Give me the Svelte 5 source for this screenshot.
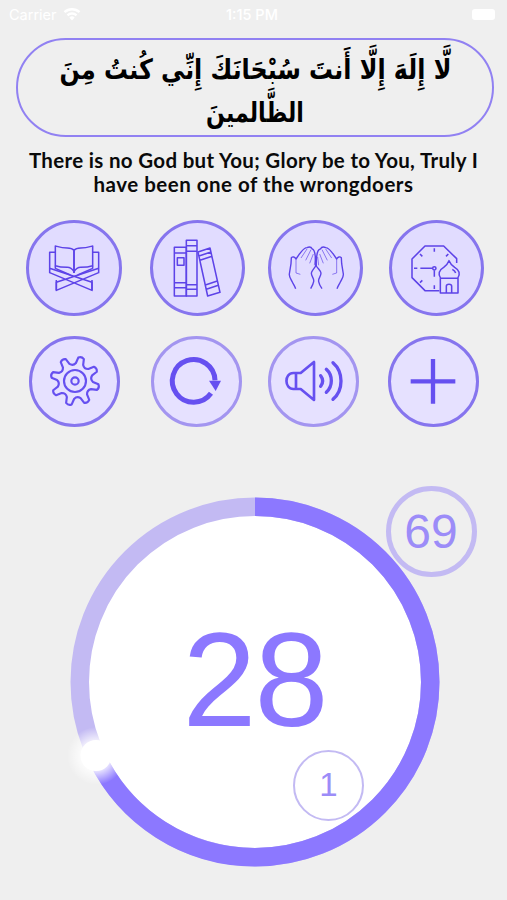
<script lang="ts">
  interface Action {
    id: string;
    label: string;
    view: string;
    faded?: boolean;
  }

  const topActions: Action[] = [
    { id: "quran", label: "Quran", view: "72 69 180 180" },
    { id: "books", label: "Books", view: "79 69 180 180" },
    { id: "dua", label: "Dua", view: "75 69 180 180" },
    { id: "times", label: "Prayer times", view: "79 69 180 180" },
  ];

  const bottomActions: Action[] = [
    { id: "settings", label: "Settings", view: "74 63 180 180" },
    { id: "reset", label: "Reset", view: "439 63 180 180", faded: true },
    { id: "sound", label: "Sound", view: "71 62 180 180", faded: true },
    { id: "add", label: "Add", view: "431 62 180 180" },
  ];

  let count = $state(28);
  let total = $state(69);
  let rounds = $state(1);

  const radius = 175.25;
  const length = 2 * Math.PI * radius;
  const progress = 0.68;

  // gear outline, eight rounded teeth
  const gear = Array.from({ length: 8 }, (_, i) => {
    const point = (r: number, deg: number) => {
      const a = ((deg + i * 45 - 75) * Math.PI) / 180;
      return `${(164 + r * Math.cos(a)).toFixed(1)} ${(153 + r * Math.sin(a)).toFixed(1)}`;
    };
    return `${i ? "L" : "M"}${point(54, -12)} L${point(71, -7)} Q${point(77, 0)} ${point(71, 7)} L${point(54, 12)} Q${point(45, 22.5)} ${point(54, 33)}`;
  }).join(" ") + "Z";
</script>

{#snippet icon(id: string)}
  {#if id === "quran"}
    <g stroke-width="4.6">
      <path d="M162 106c-5-6-12-7-20-7-14 0-21-2-36-6v59c14 5 22 5 36 5 9 0 15 5 20 13 5-8 11-13 20-13 14 0 22 0 36-5V93c-15 4-22 6-36 6-8 0-15 1-20 7zv68" />
      <path d="M162 106v68M106 112H89v61l127 53v-24L89 160M218 112h18v61l-127 53v-24l127-42" />
      <path d="M106 152v8l45 20M218 152v8l-45 20M109 195v31M216 195v31" />
    </g>
  {:else if id === "books"}
    <g stroke-width="4.6">
      <path d="M101 97h36v146h-36zM101 114h36M101 203h36M101 218h36M110 128h20v23h-20z" />
      <path d="M137 76h32v167h-32zM137 92h32M137 109h32M137 209h32M137 223h32" />
      <path d="M172 111l36-12 30 133-37 11zM175 123l36-12M178 136l36-12M194 210l36-12M197 223l36-12" />
    </g>
  {:else if id === "dua"}
    <g stroke-width="4.2">
      <path d="M104 221c-3-8-8-15-10-20-5-10-10-16-9-24l5-31 1-18c4-4 10-3 14 4l11-16c7-8 13-18 22-18 6-3 12-3 16 4 6 1 8 13 9 24 1 10 2 14 1 27-5 8-12 14-13 21 0 11 9 15 7 26-1 6-5 14-9 21" />
      <path d="M228 221c3-8 8-15 10-20 5-10 10-16 9-24l-5-31-1-18c-4-4-10-3-14 4l-11-16c-7-8-13-18-22-18-6-3-12-3-16 4-6 1-10 12-11 24-1 10-2 14-1 27 5 8 13 14 14 21 0 11-9 15-7 26 1 6 5 14 10 21" />
      <path stroke-width="2" d="M105 132v42l13 4M138 102l-18 27M150 104l-16 32M157 117l-11 28M163 126l-3 25M227 132v42l-13 4M194 102l18 27M183 104l16 32M176 117l11 28M170 126l3 25" />
    </g>
  {:else if id === "times"}
    <g stroke-width="4.6">
      <path d="M231 144v-13l-39-38h-56l-39 39v56l39 39h43" />
      <circle cx="164" cy="160" r="5" />
      <path d="M122 160h37M164 166v19M164 100v10M164 211v11M103 160h10M121 117l7 7M206 117l-7 7M121 203l7-7" />
      <path d="M183 190c-9-13-5-25 9-33 7-5 12-10 16-20 4 10 10 15 17 20 14 8 18 20 9 33zM182 190h53v44h-53zM200 234v-20q0-6 8-6t8 6v20M218 163q8 4 10 11" />
    </g>
  {:else if id === "settings"}
    <g stroke-width="6.5">
      <path d={gear} />
      <circle cx="164" cy="153" r="33" />
      <circle cx="164" cy="153" r="11" />
    </g>
  {:else if id === "reset"}
    <path stroke-width="15" d="M574 190A64 64 0 1 1 586 151" />
    <path class="solid" d="M568 152h36l-16 31z" />
  {:else if id === "sound"}
    <g stroke-width="8">
      <path d="M161 95v114l-40-33H99c-27 0-28-48 0-48h22zM107 129v46" />
      <path stroke-width="10" stroke-linecap="round" d="M181 136q12 16 0 32M198 117c20 18 20 51 0 69M218 97c32 28 32 82 0 110" />
    </g>
  {:else}
    <path stroke-width="13" d="M521 86v134M454 153h134" />
  {/if}
{/snippet}

{#snippet actionButton(action: Action)}
  <button class="action {action.id}" class:faded={action.faded} aria-label={action.label}>
    <svg viewBox={action.view}>{@render icon(action.id)}</svg>
  </button>
{/snippet}

<main class="screen">
  <header class="status">
    <div class="carrier">
      <span>Carrier</span>
      <svg class="wifi" viewBox="0 0 18 14">
        <path d="M1.5 5.2a11 11 0 0 1 15 0M4.5 8.4a6.5 6.5 0 0 1 9 0" />
        <path class="dot" d="M9 13.5l-2.7-3a4 4 0 0 1 5.4 0z" />
      </svg>
    </div>
    <span class="time">1:15 PM</span>
    <div class="battery"></div>
  </header>

  <section class="verse" dir="rtl" lang="ar">
    <p>لَّا إِلَهَ إِلَّا أَنتَ سُبْحَانَكَ إِنِّي كُنتُ مِنَ</p>
    <p class="second">الظَّالمينَ</p>
  </section>

  <div class="translation">
    <p>There is no God but You; Glory be to You, Truly I</p>
    <p class="rest">have been one of the wrongdoers</p>
  </div>

  <nav class="actions top">
    {#each topActions as action (action.id)}
      {@render actionButton(action)}
    {/each}
  </nav>
  <nav class="actions bottom">
    {#each bottomActions as action (action.id)}
      {@render actionButton(action)}
    {/each}
  </nav>

  <section class="dial">
    <svg class="ring" viewBox="0 0 370 370">
      <defs>
        <radialGradient id="glow">
          <stop offset="45%" stop-color="#fff" stop-opacity="0.9" />
          <stop offset="100%" stop-color="#fff" stop-opacity="0" />
        </radialGradient>
      </defs>
      <circle class="track" cx="185" cy="185" r={radius} />
      <circle
        class="progress"
        cx="185"
        cy="185"
        r={radius}
        stroke-dasharray="{length * progress} {length}"
        transform="rotate(-90 185 185)"
      />
      <circle cx="26" cy="259" r="29" fill="url(#glow)" />
      <circle cx="26" cy="258.5" r="15.5" fill="#fff" />
    </svg>
    <span class="count">{count}</span>
    <div class="badge total">{total}</div>
    <div class="badge rounds">{rounds}</div>
  </section>
</main>

<style>
  :global(body) {
    margin: 0;
    background: #efefef;
  }

  .screen {
    width: 507px;
    height: 900px;
    overflow: hidden;
    background: #efefef;
    font-family: "Liberation Sans", Arial, sans-serif;
  }

  p {
    margin: 0;
    white-space: nowrap;
  }

  .status {
    display: grid;
    grid-template-columns: 1fr auto 1fr;
    align-items: center;
    box-sizing: border-box;
    height: 28px;
    padding: 0 12px 0 9px;
    font: 14.5px Inter, sans-serif;
    color: #fff;
  }

  .carrier {
    display: flex;
    align-items: center;
    gap: 6px;
  }

  .wifi {
    width: 18px;
    height: 14px;
    fill: none;
    stroke: #fff;
    stroke-width: 2.5;
  }

  .wifi .dot {
    fill: #fff;
    stroke: none;
  }

  .time {
    font-weight: 500;
  }

  .battery {
    justify-self: end;
    width: 23px;
    height: 11px;
    border-radius: 3px;
    background: #fff;
  }

  .verse {
    display: flex;
    flex-direction: column;
    align-items: center;
    box-sizing: border-box;
    width: 478px;
    height: 99px;
    margin: 10px 0 0 16px;
    padding-top: 7px;
    border: 2.5px solid #9181f2;
    border-radius: 50px;
    font: bold 28px/45px "DejaVu Sans", sans-serif;
    color: #000;
  }

  .verse p {
    transform: scaleX(0.85);
  }

  .verse .second {
    line-height: 42px;
    transform: scaleX(0.79);
  }

  .translation {
    margin-top: 11px;
    text-align: center;
    font: bold 20.5px/24px Lato, sans-serif;
    letter-spacing: 0.32px;
    color: #0a0a0a;
  }

  .translation .rest {
    letter-spacing: 0.5px;
  }

  .actions {
    display: flex;
    align-items: center;
    justify-content: space-between;
  }

  .actions.top {
    margin: 24px 23px 0 26px;
  }

  .actions.bottom {
    margin: 19.5px 28px 0 29px;
  }

  .action {
    display: flex;
    align-items: center;
    justify-content: center;
    box-sizing: border-box;
    width: 95px;
    height: 96px;
    padding: 0;
    border: 3.5px solid #8675ee;
    border-radius: 50%;
    background: #e1dcff;
  }

  .action.quran {
    width: 96px;
  }

  .action.books,
  .action.reset {
    margin: 0 -2px 0 2px;
  }

  .bottom .action {
    width: 91px;
    height: 91px;
    background: #e6e1ff;
  }

  .bottom .action.faded {
    border-color: #a395f0;
  }

  .action svg {
    flex: none;
    width: 60px;
    height: 60px;
    fill: none;
    stroke: #5d43e8;
    stroke-linejoin: round;
  }

  .bottom .action svg {
    stroke: #6650f0;
  }

  .action svg .solid {
    fill: #6650f0;
    stroke: none;
  }

  .dial {
    position: relative;
    display: flex;
    align-items: center;
    justify-content: center;
    width: 370px;
    height: 370px;
    margin: 70px 0 0 69.5px;
  }

  .ring {
    position: absolute;
    inset: 0;
    overflow: visible;
  }

  .track {
    fill: #fff;
    stroke: #c3baf3;
    stroke-width: 18.5;
  }

  .progress {
    fill: none;
    stroke: #8c78ff;
    stroke-width: 18.5;
  }

  .count {
    position: relative;
    margin-bottom: 4px;
    font-size: 133px;
    line-height: 136px;
    letter-spacing: -2px;
    color: #8c78ff;
  }

  .badge {
    position: absolute;
    display: flex;
    align-items: center;
    justify-content: center;
    box-sizing: border-box;
    border-radius: 50%;
    color: #9c8cf8;
  }

  .badge.total {
    top: -11px;
    left: 316px;
    width: 91px;
    height: 91px;
    border: 5px solid #c3baf3;
    font-size: 48px;
  }

  .badge.rounds {
    top: 253px;
    left: 223.5px;
    width: 71px;
    height: 71px;
    border: 2px solid #c3baf3;
    font-size: 33px;
  }
</style>
